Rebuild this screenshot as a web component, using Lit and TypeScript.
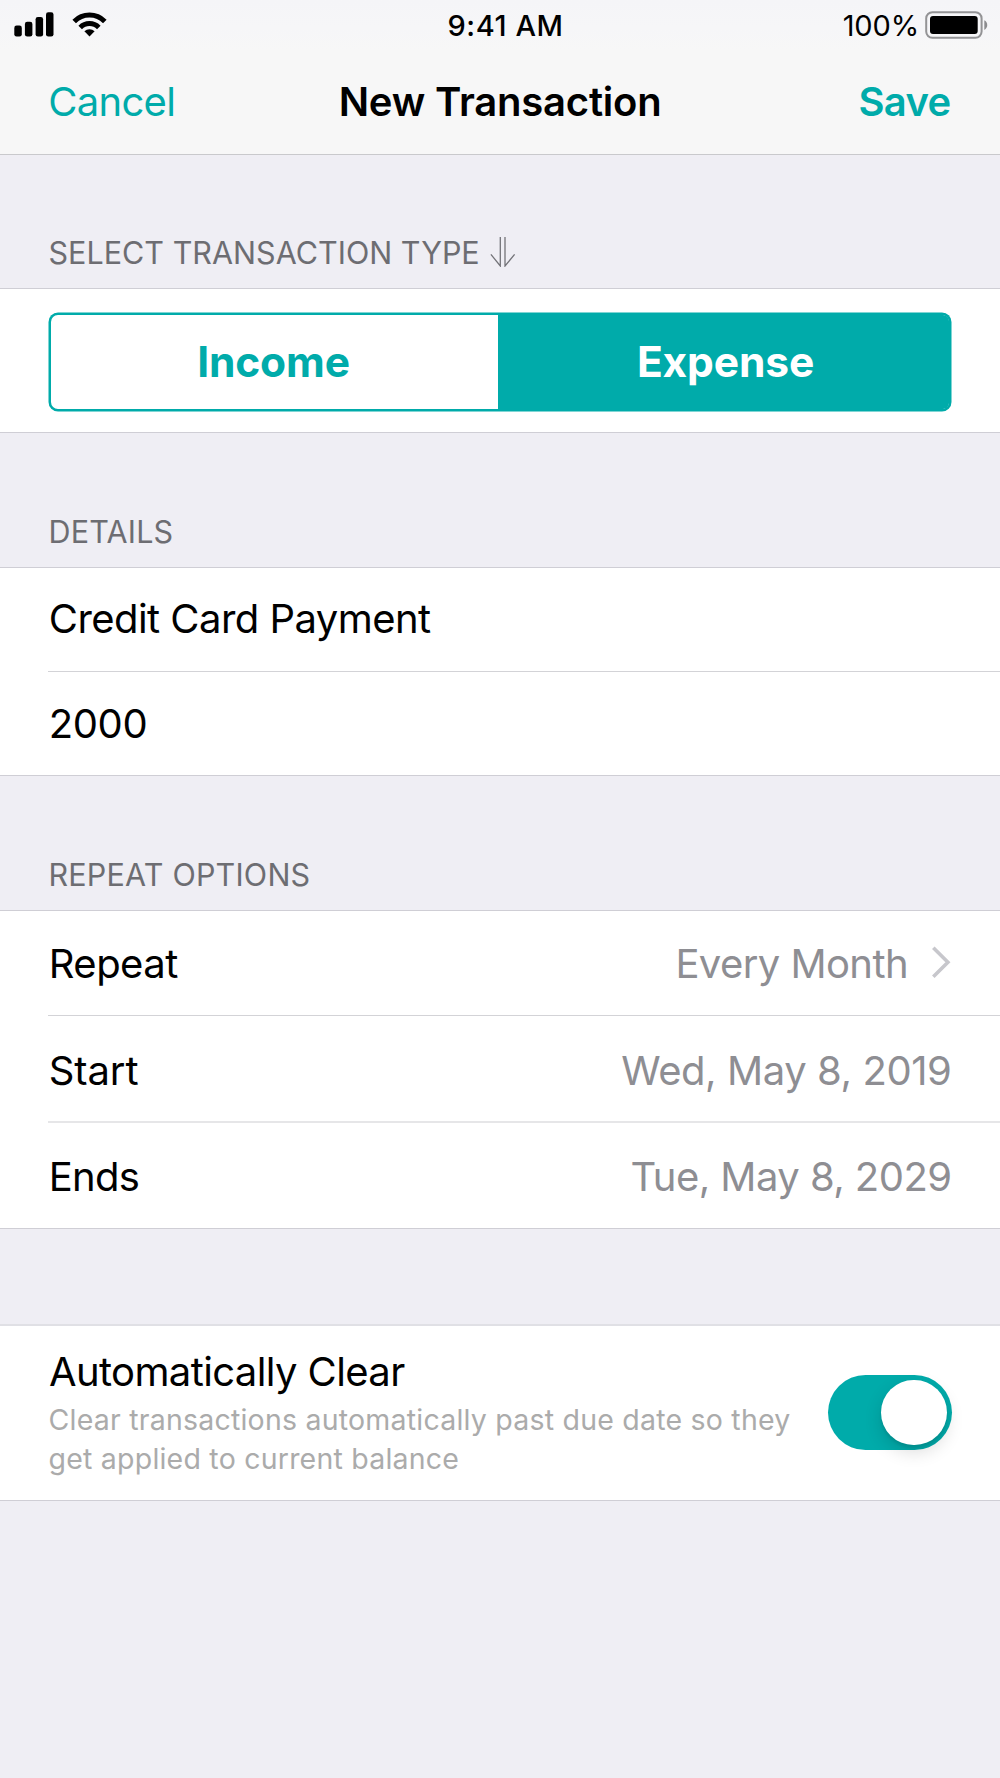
import { LitElement, html, css, svg } from "lit";
import { customElement, state } from "lit/decorators.js";

const signalIcon = html`<svg class="signal" width="40" height="25" viewBox="0 0 40 25">
  ${[
    [0.3, 13.6, 11],
    [10.9, 9.8, 14.8],
    [21.6, 4.9, 19.7],
    [32, 0.2, 24.4],
  ].map(([x, y, h]) => svg`<rect x=${x} y=${y} width="7.5" height=${h} rx="2.3" />`)}
</svg>`;

const wifiIcon = html`<svg class="wifi" width="36" height="26" viewBox="0 0 36 26">
  <path d="M2.2 9.4A21.6 21.6 0 0 1 32.8 9.4" fill="none" stroke="#000" stroke-width="5" />
  <path d="M8.2 15.4A13.15 13.15 0 0 1 26.8 15.4" fill="none" stroke="#000" stroke-width="5" />
  <path d="M12.4 19.2A7.4 7.4 0 0 1 22.6 19.2L17.5 24.6Z" />
</svg>`;

const batteryIcon = html`<svg class="battery" width="64" height="28" viewBox="0 0 64 28">
  <rect x="1.2" y="1.2" width="55.4" height="25.6" rx="6.2" fill="none" stroke="#939395" stroke-width="2" />
  <rect x="5" y="5" width="47.7" height="18" rx="3" fill="#000" />
  <path d="M59.3 9.3A5.4 5.4 0 0 1 59.3 18.9Z" fill="#8c8c8e" />
</svg>`;

const downArrowsIcon = html`<svg class="arrows" width="26" height="31" viewBox="0 0 26 31">
  <path d="M10.3 1V30L.9 18.4M15 1V30L24.6 18.4" fill="none" stroke="#737378" stroke-width="1.3" />
</svg>`;

const chevronIcon = html`<svg class="chevron" width="19" height="33" viewBox="0 0 19 33">
  <path d="M1.3 1.8L15.9 16.3L1.3 30.8" fill="none" stroke="#c7c7cc" stroke-width="3.6" />
</svg>`;

@customElement("app-root")
class AppRoot extends LitElement {
  @state() private kind: "income" | "expense" = "expense";
  @state() private autoClear = true;

  static styles = css`
    :host {
      display: block;
      min-height: 1778px;
      background: #efeef4;
      color: #000;
      font-family: Inter, "Liberation Sans", sans-serif;
      font-size: 40px;
      letter-spacing: -0.55px;
      white-space: nowrap;
    }
    svg { display: block; flex: none; }
    header {
      height: 154px;
      background: linear-gradient(#f5f5f8, #f6f6f8 28px, #f7f7f7 50px);
      border-bottom: 1px solid #c9c9cc;
    }
    .status, .nav { display: grid; grid-template-columns: 1fr auto 1fr; align-items: center; }
    .status {
      height: 50px;
      padding: 0 11px 0 14px;
      font-size: 29px;
      letter-spacing: 0.56px;
      font-weight: 500;
    }
    .radio { display: flex; gap: 18px; padding-bottom: 1px; }
    .time { padding-left: 8px; }
    .power { display: flex; justify-content: flex-end; align-items: center; gap: 6px; font-weight: 400; letter-spacing: -0.13px; }
    .battery { margin-bottom: 1px; }
    .nav { height: 103px; padding: 0 49px 0 48.25px; }
    .cancel { color: #00abaa; letter-spacing: -0.7px; }
    .title { font-weight: 600; letter-spacing: -0.2px; padding-left: 1px; }
    .save { color: #00abaa; font-weight: 600; letter-spacing: -0.68px; text-align: right; padding-right: 0.5px; }
    .caption {
      display: flex;
      align-items: flex-end;
      box-sizing: border-box;
      height: 134px;
      padding: 0 48.5px 17px;
      color: #6d6d72;
      font-size: 30.5px;
      line-height: 36px;
      letter-spacing: 0.2px;
    }
    .caption.first { height: 133px; padding-bottom: 17px; letter-spacing: 0.02px; }
    .arrows { margin: 0 0 4px 10px; }
    .card { background: #fff; border-top: 1px solid #cfced5; border-bottom: 1px solid #cfced5; }
    .segments {
      display: grid;
      grid-template-columns: 447px 1fr;
      box-sizing: border-box;
      height: 98px;
      margin: 24px 49px 21px;
      border: 2px solid #00abaa;
      border-radius: 9px;
      box-shadow: 0 0 0 0.5px #00abaa;
      background: #fff;
      font-size: 42.5px;
      font-weight: 700;
      letter-spacing: -0.15px;
      color: #00abaa;
    }
    .segment { display: flex; align-items: center; justify-content: center; padding: 0 2px 1px 0; }
    .segment.on { background: #00abaa; color: #fff; padding: 0 0 1px 4px; border-radius: 0 6px 6px 0; }
    .row { display: flex; align-items: center; height: 103px; padding: 0 48.5px; }
    .divider { height: 1px; margin-left: 48px; background: #d3d3d7; }
    .divider.soft { height: 2px; background: #e6e6e8; }
    .row.name { height: 101px; padding-bottom: 2px; }
    .row.repeat { height: 103px; padding-top: 1px; }
    .row.start { height: 102px; padding-top: 3px; }
    .row.ends { height: 103px; padding-top: 2px; }
    .value { margin-left: auto; color: #8e8e93; }
    .start .value { letter-spacing: -0.42px; }
    .label { padding-left: 0.25px; }
    .start .label { letter-spacing: -0.1px; }
    .ends .label { letter-spacing: -0.7px; }
    .amount .label { letter-spacing: -0.4px; }
    .repeat .value { letter-spacing: -0.58px; }
    .chevron { margin: 0 0.5px 2px 24px; }
    .auto { margin-top: 95px; border-top: 2px solid #e0e0e5; }
    .option { display: flex; align-items: center; justify-content: space-between; height: 174px; padding: 0 48.5px; }
    .copy { padding-top: 2px; }
    .option .name { line-height: 44px; letter-spacing: -0.62px; margin-bottom: 6px; padding-left: 0.5px; }
    .hint { color: #ababab; font-size: 28.5px; line-height: 39px; letter-spacing: 0.22px; }
    .switch {
      display: flex;
      justify-content: flex-end;
      box-sizing: border-box;
      width: 123.5px;
      height: 75px;
      margin-bottom: 1px;
      padding: 4.75px;
      border-radius: 38px;
      background: #00abaa;
    }
    .switch.off { justify-content: flex-start; background: #e5e5ea; }
    .knob {
      width: 65.5px;
      height: 65.5px;
      border-radius: 50%;
      background: #fff;
      box-shadow: 0 7px 18px rgba(0, 0, 0, 0.14), 0 3px 3px rgba(0, 0, 0, 0.08);
    }
  `;

  private segment(id: "income" | "expense", label: string) {
    return html`<div class="segment ${this.kind === id ? "on" : ""}" @click=${() => (this.kind = id)}>${label}</div>`;
  }

  render() {
    return html`
      <header>
        <div class="status">
          <div class="radio">${signalIcon}${wifiIcon}</div>
          <div class="time">9:41 AM</div>
          <div class="power"><span>100%</span>${batteryIcon}</div>
        </div>
        <div class="nav">
          <div class="cancel">Cancel</div>
          <div class="title">New Transaction</div>
          <div class="save">Save</div>
        </div>
      </header>

      <div class="caption first">SELECT TRANSACTION TYPE${downArrowsIcon}</div>
      <section class="card">
        <div class="segments">${this.segment("income", "Income")}${this.segment("expense", "Expense")}</div>
      </section>

      <div class="caption">DETAILS</div>
      <section class="card">
        <div class="row name"><span class="label">Credit Card Payment</span></div>
        <div class="divider"></div>
        <div class="row amount"><span class="label">2000</span></div>
      </section>

      <div class="caption">REPEAT OPTIONS</div>
      <section class="card">
        <div class="row repeat"><span class="label">Repeat</span><span class="value">Every Month</span>${chevronIcon}</div>
        <div class="divider"></div>
        <div class="row start"><span class="label">Start</span><span class="value">Wed, May 8, 2019</span></div>
        <div class="divider soft"></div>
        <div class="row ends"><span class="label">Ends</span><span class="value">Tue, May 8, 2029</span></div>
      </section>

      <section class="card auto">
        <div class="option">
          <div class="copy">
            <div class="name">Automatically Clear</div>
            <div class="hint">Clear transactions automatically past due date so they<br />get applied to current balance</div>
          </div>
          <div class="switch ${this.autoClear ? "" : "off"}" @click=${() => (this.autoClear = !this.autoClear)}>
            <div class="knob"></div>
          </div>
        </div>
      </section>
    `;
  }
}
